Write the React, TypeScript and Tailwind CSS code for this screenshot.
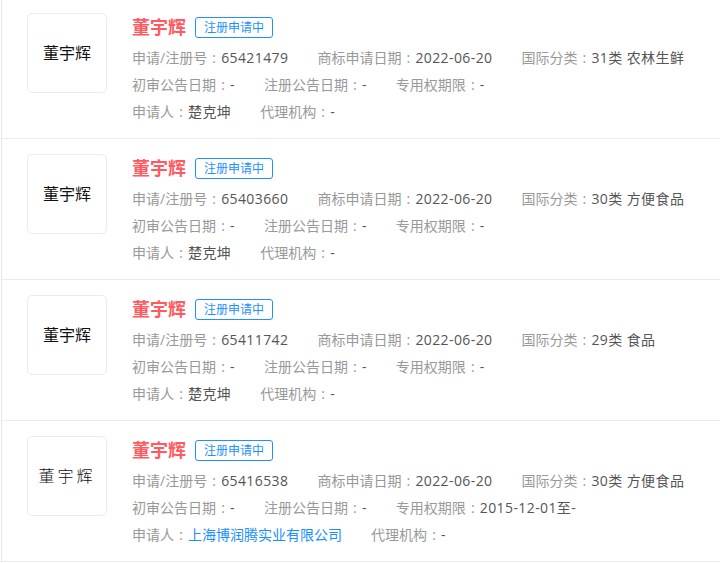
import React from "react";

type Item = {
  regNo: string;
  intlClass: string;
  validity: string;
  applicant: string;
  applicantLink?: boolean;
  altLogo?: boolean;
};

const items: Item[] = [
  { regNo: "65421479", intlClass: "31类 农林生鲜", validity: "-", applicant: "楚克坤" },
  { regNo: "65403660", intlClass: "30类 方便食品", validity: "-", applicant: "楚克坤" },
  { regNo: "65411742", intlClass: "29类 食品", validity: "-", applicant: "楚克坤" },
  {
    regNo: "65416538",
    intlClass: "30类 方便食品",
    validity: "2015-12-01至-",
    applicant: "上海博润腾实业有限公司",
    applicantLink: true,
    altLogo: true,
  },
];

function Field({ label, value, link }: { label: string; value: string; link?: boolean }) {
  return (
    <span className="whitespace-nowrap">
      <span className="text-[#999]">
        {label}
        <span className="inline-block w-[14px] text-center">:</span>
      </span>
      <span className={link ? "text-[#1890ff]" : "tracking-[0.4px] text-[#555]"}>{value}</span>
    </span>
  );
}

function TrademarkRow({ item }: { item: Item }) {
  return (
    <div className="flex h-[141px] border-b border-[#ececec] pl-[25px] pt-[15px]">
      {/* Logo */}
      <div className="flex h-[80px] w-[80px] shrink-0 items-center justify-center rounded-[5px] border border-[#ececec] bg-white">
        {item.altLogo ? (
          <span className="text-[16px] font-light tracking-[3px] text-[#111]">董宇辉</span>
        ) : (
          <span className="text-[16px] text-[#111]">董宇辉</span>
        )}
      </div>

      {/* Info */}
      <div className="ml-[25px] flex-1">
        <div className="flex h-[28px] items-center">
          <span className="text-[18px] font-bold text-[#ff5a5f]">董宇辉</span>
          <span className="ml-[9px] rounded-[3px] border border-[#1e90ff] px-[8px] text-[12px] leading-[19px] text-[#1e90ff]">
            注册申请中
          </span>
        </div>
        <div className="mt-[3px] text-[14px] leading-[27px]">
          <div className="flex gap-x-[29px]">
            <Field label="申请/注册号" value={item.regNo} />
            <Field label="商标申请日期" value="2022-06-20" />
            <Field label="国际分类" value={item.intlClass} />
          </div>
          <div className="flex gap-x-[29px]">
            <Field label="初审公告日期" value="-" />
            <Field label="注册公告日期" value="-" />
            <Field label="专用权期限" value={item.validity} />
          </div>
          <div className="flex gap-x-[29px]">
            <Field label="申请人" value={item.applicant} link={item.applicantLink} />
            <Field label="代理机构" value="-" />
          </div>
        </div>
      </div>
    </div>
  );
}

export default function App() {
  return (
    <div
      className="h-[563px] w-[720px] overflow-hidden bg-white"
      style={{ fontFamily: '"Open Sans", "Noto Sans CJK SC", sans-serif' }}
    >
      <div className="-mt-[2px] ml-[1px] border-l border-[#e6e6e6]">
        {items.map((item) => (
          <TrademarkRow key={item.regNo} item={item} />
        ))}
      </div>
    </div>
  );
}
